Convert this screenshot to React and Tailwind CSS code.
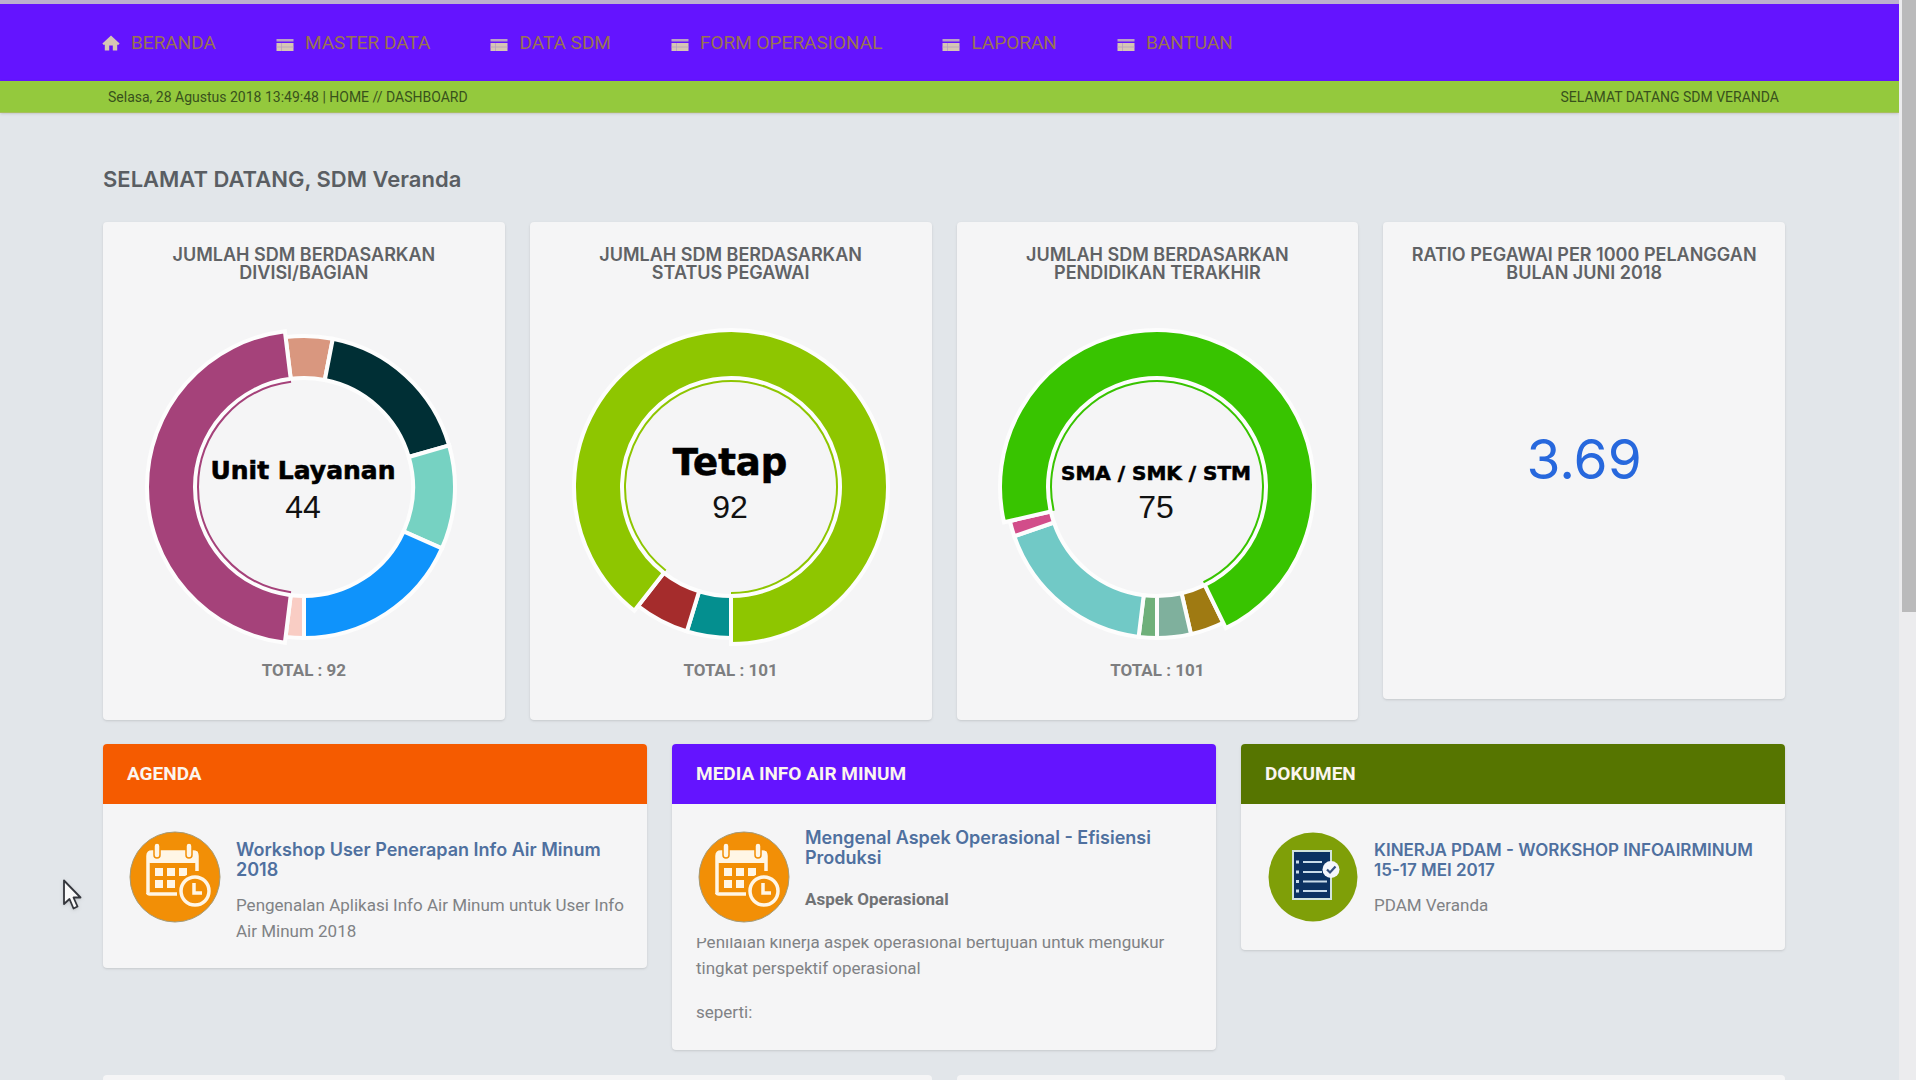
const NAV = [
  { label: "BERANDA", icon: "home" },
  { label: "MASTER DATA", icon: "table" },
  { label: "DATA SDM", icon: "table" },
  { label: "FORM OPERASIONAL", icon: "table" },
  { label: "LAPORAN", icon: "table" },
  { label: "BANTUAN", icon: "table" },
];

const CHARTS = [
  {
    title: ["JUMLAH SDM BERDASARKAN", "DIVISI/BAGIAN"],
    total: "TOTAL : 92",
    label: "Unit Layanan",
    value: "44",
    size: 25,
    baseline: -8,
    segments: [
      { from: -7, to: 11, color: "#d9977f" },
      { from: 11, to: 74, color: "#002f35" },
      { from: 74, to: 114, color: "#76d2c2" },
      { from: 114, to: 180, color: "#0f93fb" },
      { from: 180, to: 187, color: "#f9cdc4" },
      { from: 187, to: 353, color: "#a5427a", active: true },
    ],
  },
  {
    title: ["JUMLAH SDM BERDASARKAN", "STATUS PEGAWAI"],
    total: "TOTAL : 101",
    label: "Tetap",
    value: "92",
    size: 37,
    baseline: -12,
    segments: [
      { from: 180, to: 197, color: "#048f8f" },
      { from: 197, to: 218, color: "#a52c2c" },
      { from: 218, to: 540, color: "#8ec600", active: true },
    ],
  },
  {
    title: ["JUMLAH SDM BERDASARKAN", "PENDIDIKAN TERAKHIR"],
    total: "TOTAL : 101",
    label: "SMA / SMK / STM",
    value: "75",
    size: 20,
    baseline: -7,
    segments: [
      { from: 154, to: 167, color: "#9f7a12" },
      { from: 167, to: 180, color: "#7fb09d" },
      { from: 180, to: 187, color: "#6fb07a" },
      { from: 187, to: 251, color: "#71c9c6" },
      { from: 251, to: 257, color: "#d24d8a" },
      { from: 257, to: 514, color: "#38c400", active: true },
    ],
  },
];

const point = (radius, degrees) => {
  const a = (degrees * Math.PI) / 180;
  return `${(radius * Math.sin(a)).toFixed(2)} ${(-radius * Math.cos(a)).toFixed(2)}`;
};

function ringPath({ from, to, active }) {
  const outer = active ? 157 : 151;
  const inner = 109;
  const large = to - from > 180 ? 1 : 0;
  return `M${point(outer, from)}A${outer} ${outer} 0 ${large} 1 ${point(outer, to)}L${point(inner, to)}A${inner} ${inner} 0 ${large} 0 ${point(inner, from)}Z`;
}

function Donut({ segments, label, value, size, baseline }) {
  const active = segments.find((s) => s.active);
  const large = active.to - active.from > 180 ? 1 : 0;
  return (
    <svg viewBox="-160 -160 320 320" className="h-[320px] w-[320px]" role="img" aria-label={`${label} ${value}`}>
      {segments.map((s) => (
        <path key={s.from} d={ringPath(s)} fill={s.color} stroke="#fdfdfd" strokeWidth="4" />
      ))}
      <path
        d={`M${point(106, active.from)}A106 106 0 ${large} 1 ${point(106, active.to)}`}
        fill="none"
        stroke={active.color}
        strokeWidth="2"
      />
      <text
        x="-1"
        y={baseline}
        textAnchor="middle"
        fill="#000"
        stroke="#000"
        strokeWidth="0.6"
        fontSize={size}
        className="font-['DejaVu_Sans',sans-serif] font-bold"
      >
        {label}
      </text>
      <text x="-1" y="31" textAnchor="middle" fill="#111" fontSize="32" className="font-['Liberation_Sans',sans-serif]">
        {value}
      </text>
    </svg>
  );
}

function HomeIcon() {
  return (
    <svg viewBox="0 0 18 16" className="h-4 w-[18px]" fill="#d6c6b4" aria-hidden="true">
      <path d="M9 0.5 17.6 8.6 16.6 9.8H15.2V15.5H10.8V10.5H7.2V15.5H2.8V9.8H1.4L0.4 8.6Z" />
    </svg>
  );
}

function TableIcon() {
  return (
    <svg viewBox="0 0 18 14" className="mt-1 h-3.5 w-[18px]" aria-hidden="true">
      <path d="M0.5 1H17.5V3.5H0.5Z" fill="#b9a2c4" />
      <path d="M0.5 5H17.5V13H0.5Z" fill="#d6c6b4" />
      <path d="M5.5 5V13M0.5 9H17.5" stroke="#b79fc0" strokeWidth="0.8" />
    </svg>
  );
}

function CalendarIcon() {
  return (
    <svg viewBox="0 0 92 92" className="h-[92px] w-[92px] shrink-0" aria-hidden="true">
      <circle cx="46" cy="46" r="45" fill="#f28f06" stroke="#a39a78" strokeWidth="1" />
      <path d="M19 63V25Q19 21 23 21H64Q68 21 68 25V40" fill="none" stroke="#fff6e6" strokeWidth="3.5" />
      <path d="M19 62Q19 63 21 63H48" fill="none" stroke="#fff6e6" strokeWidth="3.5" />
      <rect x="19" y="20" width="50" height="12" rx="2" fill="#fff6e6" />
      <g fill="#fff6e6" stroke="#f28f06" strokeWidth="1.5">
        <rect x="25" y="12" width="6" height="15" rx="3" />
        <rect x="57" y="12" width="6" height="15" rx="3" />
      </g>
      <g fill="#fff6e6">
        <rect x="26" y="37" width="8" height="8" />
        <rect x="38" y="37" width="8" height="8" />
        <rect x="50" y="37" width="8" height="8" />
        <rect x="26" y="49" width="8" height="8" />
        <rect x="38" y="49" width="8" height="8" />
      </g>
      <circle cx="66" cy="60" r="18" fill="#f28f06" />
      <circle cx="66" cy="60" r="14" fill="#f28f06" stroke="#fff6e6" strokeWidth="3.5" />
      <path d="M65 52V62H73" fill="none" stroke="#fff6e6" strokeWidth="3.5" />
    </svg>
  );
}

function DocumentIcon() {
  return (
    <svg viewBox="0 0 92 92" className="h-[92px] w-[92px] shrink-0" aria-hidden="true">
      <circle cx="46" cy="46" r="44.5" fill="#7f9f08" />
      <rect x="26" y="20" width="38" height="48" fill="#0c3262" stroke="#d3e4dc" strokeWidth="2" />
      <g stroke="#c9dcea" strokeWidth="2">
        <path d="M36 31H55M36 41H55M36 50.5H60M36 60H60" />
        <path d="M29 31H32M29 41H32M29 50.5H32M29 60H32" strokeWidth="3" />
      </g>
      <circle cx="64" cy="38.5" r="8.5" fill="#f4f6fb" />
      <path d="M60 38.5 63 41.5 68.5 35.5" fill="none" stroke="#35507e" strokeWidth="2.2" />
    </svg>
  );
}

function StatCard({ title, children }) {
  return (
    <section className="flex flex-col items-center rounded bg-[#f5f5f6] pt-6 shadow-sm">
      <h2 className="text-center text-[18px] leading-[18px] font-semibold text-[#606265] font-['Inter',sans-serif]">
        {title.map((line) => (
          <span key={line} className="block">{line}</span>
        ))}
      </h2>
      {children}
    </section>
  );
}

function Panel({ title, color, children }) {
  return (
    <section className="overflow-hidden rounded bg-[#f5f5f6] shadow-sm">
      <h2 className={`px-6 py-5 text-[19px] leading-5 font-bold text-[#fbf5ee] font-['Roboto',sans-serif] ${color}`}>{title}</h2>
      {children}
    </section>
  );
}

function ItemTitle({ children, size = "text-[18px]" }) {
  return (
    <h3 className={`leading-5 font-semibold text-[#4f709f] font-['Inter',sans-serif] ${size}`}>
      <a href="#item">{children}</a>
    </h3>
  );
}

export default function App() {
  return (
    <div className="flex h-screen overflow-hidden bg-white pr-1 font-['Roboto',sans-serif]">
      <div className="min-w-0 flex-1 overflow-hidden bg-[#e2e6ea]">
        <header>
          <nav className="flex h-[81px] items-center gap-[60px] border-t-4 border-[#bcb0cf] bg-[#6414ff] pl-[102px]">
            {NAV.map((item) => (
              <a key={item.label} href={`#${item.label}`} className="flex items-center gap-[11px] text-[19px] leading-6 whitespace-nowrap text-[#9a7450]">
                {item.icon === "home" ? <HomeIcon /> : <TableIcon />}
                {item.label}
              </a>
            ))}
          </nav>
          <div className="flex h-8 items-center justify-between border-b border-[#a8bf5c] bg-[#94c93d] pt-0.5 pr-[120px] pl-[108px] text-[14px] text-[#38511c] shadow-sm">
            <span>Selasa, 28 Agustus 2018 13:49:48 | HOME // DASHBOARD</span>
            <span>SELAMAT DATANG SDM VERANDA</span>
          </div>
        </header>
        <main className="pr-[114px] pl-[103px]">
          <h1 className="pt-[53px] pb-[30px] text-[22px] leading-[26px] font-semibold text-[#5a5e63] font-['Inter',sans-serif]">
            SELAMAT DATANG, SDM Veranda
          </h1>
          <div className="grid grid-cols-4 items-start gap-[25px]">
            {CHARTS.map((chart) => (
              <StatCard key={chart.label} title={chart.title}>
                <div className="pt-[45px]">
                  <Donut {...chart} />
                </div>
                <p className="pt-[11px] pb-[38px] text-[17px] leading-6 font-bold text-[#7d7e80]">{chart.total}</p>
              </StatCard>
            ))}
            <StatCard title={["RATIO PEGAWAI PER 1000 PELANGGAN", "BULAN JUNI 2018"]}>
              <p className="pt-[140px] pb-[202px] text-[55px] leading-[75px] text-[#2768dd] font-['Inter',sans-serif]">3.69</p>
            </StatCard>
          </div>
          <div className="grid grid-cols-3 items-start gap-[25px] pt-6">
            <Panel title="AGENDA" color="bg-[#f55b00]">
              <div className="flex gap-[15px] pt-[27px] pr-4 pb-6 pl-[26px]">
                <CalendarIcon />
                <div className="pt-[9px]">
                  <ItemTitle>Workshop User Penerapan Info Air Minum 2018</ItemTitle>
                  <p className="pt-3 text-[17px] leading-[26px] text-[#808285]">
                    Pengenalan Aplikasi Info Air Minum untuk User Info Air Minum 2018
                  </p>
                </div>
              </div>
            </Panel>
            <Panel title="MEDIA INFO AIR MINUM" color="bg-[#6414ff]">
              <div className="flex gap-[15px] pt-[27px] pr-4 pl-[26px]">
                <CalendarIcon />
                <div className="-mt-[3px]">
                  <ItemTitle>Mengenal Aspek Operasional - Efisiensi Produksi</ItemTitle>
                  <p className="pt-[18px] text-[17px] leading-[26px] font-bold text-[#707275]">Aspek Operasional</p>
                </div>
              </div>
              <div className="mt-[15px] overflow-hidden px-6 pb-[25px] text-[17px] leading-[26px] text-[#808285]">
                <p className="-mt-[9px]">Penilaian kinerja aspek operasional bertujuan untuk mengukur tingkat perspektif operasional</p>
                <p className="pt-[18px]">seperti:</p>
              </div>
            </Panel>
            <Panel title="DOKUMEN" color="bg-[#567500]">
              <div className="flex gap-[15px] pt-[27px] pr-4 pb-[27px] pl-[26px]">
                <DocumentIcon />
                <div className="pt-[9px]">
                  <ItemTitle size="text-[17px]">KINERJA PDAM - WORKSHOP INFOAIRMINUM 15-17 MEI 2017</ItemTitle>
                  <p className="pt-3 text-[17px] leading-[26px] text-[#808285]">PDAM Veranda</p>
                </div>
              </div>
            </Panel>
          </div>
          <div className="grid grid-cols-2 gap-[25px] pt-[25px]">
            <div className="h-40 rounded bg-[#f5f5f6]" />
            <div className="h-40 rounded bg-[#f5f5f6]" />
          </div>
        </main>
      </div>
      <div className="w-[17px] bg-[#ececee] pl-[3px]">
        <div className="h-[612px] bg-[#bababb]" />
      </div>
      <svg viewBox="0 0 24 32" className="absolute top-[879px] left-[62px] h-8 w-6 drop-shadow" aria-hidden="true">
        <path d="M2 1.5V25L7.5 20 11.5 29.5 15.5 27.5 11.5 18.5H18.5Z" fill="#fafafa" stroke="#34363c" strokeWidth="1.8" strokeLinejoin="round" />
      </svg>
    </div>
  );
}
